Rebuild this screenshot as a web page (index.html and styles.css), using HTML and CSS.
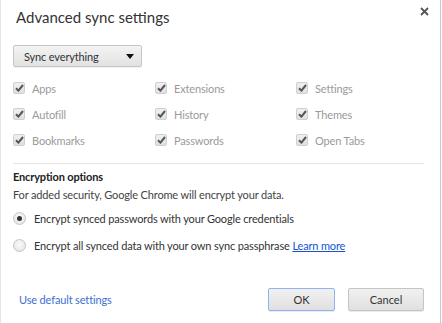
FILE: index.html
```html
<!DOCTYPE html>
<html>
<head>
<meta charset="utf-8">
<link rel="stylesheet" href="styles.css">
</head>
<body>
<div class="dialog">
  <div class="header">
    <h1 class="title">Advanced sync settings</h1>
    <span class="close">
      <svg width="9" height="9" viewBox="0 0 9 9"><path d="M1 1 L8 8 M8 1 L1 8" stroke="#555" stroke-width="1.8"/></svg>
    </span>
  </div>

  <div class="select">
    <span>Sync everything</span>
    <svg class="caret" width="8" height="5" viewBox="0 0 8 5"><path d="M0 0 H8 L4 5 Z" fill="#111"/></svg>
  </div>

  <div class="types">
    <label class="item"><span class="cb"><svg width="9" height="8" viewBox="0 0 9 8"><path d="M1 4.2 L3.4 6.6 L8 1" fill="none" stroke="#555" stroke-width="2"/></svg></span>Apps</label>
    <label class="item"><span class="cb"><svg width="9" height="8" viewBox="0 0 9 8"><path d="M1 4.2 L3.4 6.6 L8 1" fill="none" stroke="#555" stroke-width="2"/></svg></span>Extensions</label>
    <label class="item"><span class="cb"><svg width="9" height="8" viewBox="0 0 9 8"><path d="M1 4.2 L3.4 6.6 L8 1" fill="none" stroke="#555" stroke-width="2"/></svg></span>Settings</label>
    <label class="item"><span class="cb"><svg width="9" height="8" viewBox="0 0 9 8"><path d="M1 4.2 L3.4 6.6 L8 1" fill="none" stroke="#555" stroke-width="2"/></svg></span>Autofill</label>
    <label class="item"><span class="cb"><svg width="9" height="8" viewBox="0 0 9 8"><path d="M1 4.2 L3.4 6.6 L8 1" fill="none" stroke="#555" stroke-width="2"/></svg></span>History</label>
    <label class="item"><span class="cb"><svg width="9" height="8" viewBox="0 0 9 8"><path d="M1 4.2 L3.4 6.6 L8 1" fill="none" stroke="#555" stroke-width="2"/></svg></span>Themes</label>
    <label class="item"><span class="cb"><svg width="9" height="8" viewBox="0 0 9 8"><path d="M1 4.2 L3.4 6.6 L8 1" fill="none" stroke="#555" stroke-width="2"/></svg></span>Bookmarks</label>
    <label class="item"><span class="cb"><svg width="9" height="8" viewBox="0 0 9 8"><path d="M1 4.2 L3.4 6.6 L8 1" fill="none" stroke="#555" stroke-width="2"/></svg></span>Passwords</label>
    <label class="item"><span class="cb"><svg width="9" height="8" viewBox="0 0 9 8"><path d="M1 4.2 L3.4 6.6 L8 1" fill="none" stroke="#555" stroke-width="2"/></svg></span>Open Tabs</label>
  </div>

  <div class="sep"></div>

  <h2 class="section-title">Encryption options</h2>
  <p class="desc">For added security, Google Chrome will encrypt your data.</p>

  <label class="radio-row first"><span class="radio checked"></span>Encrypt synced passwords with your Google credentials</label>
  <label class="radio-row"><span class="radio"></span>Encrypt all synced data with your own sync passphrase&nbsp;<a class="learn" href="#">Learn more</a></label>

  <div class="footer">
    <a class="default-link" href="#">Use default settings</a>
    <div class="buttons">
      <button class="btn ok">OK</button>
      <button class="btn cancel">Cancel</button>
    </div>
  </div>
</div>
</body>
</html>
```

FILE: styles.css
```css
html, body {
  margin: 0;
  padding: 0;
  background: #fff;
}

.dialog {
  width: 441px;
  height: 323px;
  box-sizing: border-box;
  border-left: 1px solid #e4e4e4;
  border-right: 1px solid #c8c8c8;
  padding: 0 16px 12px 12px;
  display: flex;
  flex-direction: column;
  font-family: "Lato", "Open Sans", sans-serif;
  font-size: 11px;
  letter-spacing: -0.15px;
  color: #333;
}

.header {
  display: flex;
  justify-content: space-between;
  align-items: flex-start;
  height: 45px;
}

.title {
  margin: 7px 0 0 3px;
  font-size: 15px;
  font-weight: normal;
  letter-spacing: 0;
  line-height: 20px;
  color: #333;
}

.close {
  margin-top: 7px;
  margin-right: -5px;
  display: flex;
}

.select {
  width: 129px;
  height: 22px;
  box-sizing: border-box;
  border: 1px solid #c6c6c6;
  border-radius: 2px;
  background: linear-gradient(#f3f3f3, #e2e2e2);
  box-shadow: 0 1px 0 rgba(0,0,0,0.06);
  display: flex;
  align-items: center;
  justify-content: space-between;
  padding: 0 7px 0 10px;
  color: #333;
}

.types {
  margin-top: 8px;
  display: grid;
  grid-template-columns: 142px 141px auto;
  grid-auto-rows: 26px;
}

.item {
  display: flex;
  align-items: center;
  color: #9a9a9a;
}

.cb {
  width: 12px;
  height: 12px;
  box-sizing: border-box;
  border: 1px solid #cfcfcf;
  border-radius: 2px;
  background: linear-gradient(#f0f0f0, #e0e0e0);
  display: flex;
  align-items: center;
  justify-content: center;
  margin-right: 7px;
}

.sep {
  height: 1px;
  background: #e6e6e6;
  margin: 10px 0 0 0;
}

.section-title {
  margin: 5px 0 0 0;
  font-size: 11px;
  font-weight: bold;
  line-height: 16px;
  color: #222;
}

.desc {
  margin: 2px 0 0 0;
  line-height: 16px;
  color: #444;
}

.radio-row {
  display: flex;
  align-items: center;
  height: 27px;
  color: #333;
}

.radio-row.first {
  margin-top: 2px;
}

.radio {
  width: 13px;
  height: 13px;
  box-sizing: border-box;
  border-radius: 50%;
  border: 1px solid #c4c4c4;
  background: radial-gradient(circle at 50% 40%, #fafafa, #e2e2e2);
  margin-right: 8px;
  display: flex;
  align-items: center;
  justify-content: center;
}

.radio.checked::after {
  content: "";
  width: 5px;
  height: 5px;
  border-radius: 50%;
  background: #333;
}

.learn {
  color: #1155cc;
  text-decoration: underline;
}

.footer {
  margin-top: auto;
  display: flex;
  justify-content: space-between;
  align-items: center;
}

.default-link {
  color: #3b6fd1;
  text-decoration: none;
  margin-left: 6px;
}

.buttons {
  display: flex;
  gap: 13px;
}

.btn {
  font-family: "Lato", "Open Sans", sans-serif;
  font-size: 11px;
  color: #333;
  height: 23px;
  width: 67px;
  box-sizing: border-box;
  border: 1px solid #c4c4c4;
  border-radius: 2px;
  background: linear-gradient(#f1f1f1, #e0e0e0);
  box-shadow: 0 1px 0 rgba(0,0,0,0.08);
  padding: 0;
}

.btn.cancel {
  width: 76px;
}

.btn.ok {
  border-color: #8eb4f0;
}
```
